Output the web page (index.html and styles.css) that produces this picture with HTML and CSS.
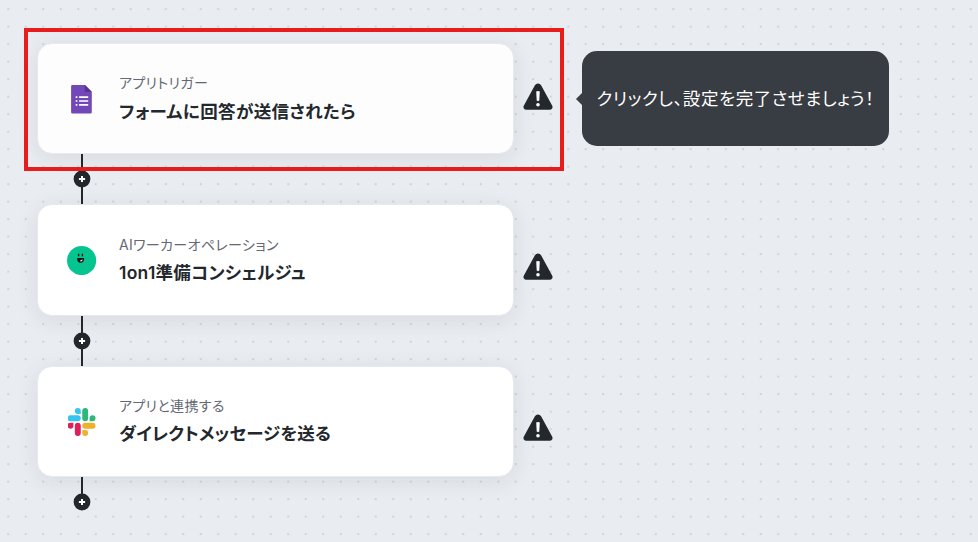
FILE: index.html
```html
<!DOCTYPE html>
<html lang="ja">
<head>
  <meta charset="UTF-8">
  <meta name="viewport" content="width=device-width, initial-scale=1.0">
  <title>ワークフロー</title>
  <link rel="stylesheet" href="styles.css">
</head>
<body>
  <svg class="symbols" width="0" height="0">
    <symbol id="warning" viewBox="0 0 30 28">
      <path d="M11.9 2.2a3.6 3.6 0 0 1 6.2 0l11 20.2a2.9 2.9 0 0 1-2.6 4.4h-23a2.9 2.9 0 0 1-2.6-4.4z" fill="#23282d"/>
      <path d="M13.7 8.6h2.6l-.4 9h-1.800z" fill="#fff" stroke="#fff" stroke-width=".8" stroke-linejoin="round"/>
      <circle cx="15" cy="21.8" r="1.8" fill="#fff"/>
    </symbol>
    <symbol id="plus" viewBox="0 0 18 18">
      <circle cx="9" cy="9" r="8.4" fill="#23282d"/>
      <path d="M9 5.9v6.2M5.9 9h6.2" stroke="#fff" stroke-width="2"/>
    </symbol>
  </svg>

  <main class="flow">
    <div class="step">
      <div class="card hovered">
        <svg class="icon" viewBox="0 0 30 30">
          <path d="M5.500 1.100h12.700l6.600 6.600v20.500a1.400 1.400 0 0 1-1.400 1.400H5.500a1.400 1.400 0 0 1-1.400-1.400V2.500A1.400 1.400 0 0 1 5.500 1.100z" fill="#7248b9"/>
          <path d="M17.800 1.100l7 7h-7z" fill="#543591"/>
          <path d="M8.700 13.100h1.700M12.100 13.100h9.100M8.700 17h1.700M12.100 17h9.100M8.700 20.900h1.700M12.100 20.900h9.100" stroke="#fff" stroke-width="1.7"/>
        </svg>
        <div class="text">
          <div class="label">アプリトリガー</div>
          <div class="title">フォームに回答が送信されたら</div>
        </div>
      </div>
      <svg class="warning first"><use href="#warning"/></svg>
      <div class="highlight"></div>
      <div class="tooltip">クリックし、設定を完了させましょう！</div>
    </div>
    <div class="connector"><svg class="plus"><use href="#plus"/></svg></div>

    <div class="step">
      <div class="card middle">
        <svg class="icon" viewBox="0 0 30 30">
          <circle cx="14.6" cy="15.5" r="14.6" fill="#05c48f"/>
          <path d="M11.6 8.8v2.400M15.400 8.800v2.400" stroke="#111" stroke-width="1.3"/>
          <path d="M10 12.900h7.200c0 3.200-1.200 4.800-3.600 4.800s-3.600-1.600-3.600-4.800z" fill="#111"/>
          <path d="M12.6 16l2.600-1.600.6.700-1.600 1.500z" fill="#fff"/>
        </svg>
        <div class="text">
          <div class="label">AIワーカーオペレーション</div>
          <div class="title">1on1準備コンシェルジュ</div>
        </div>
      </div>
      <svg class="warning"><use href="#warning"/></svg>
    </div>
    <div class="connector"><svg class="plus"><use href="#plus"/></svg></div>

    <div class="step">
      <div class="card lower">
        <svg class="icon slack" viewBox="0 0 122.8 122.8">
          <path d="M25.8 77.6a12.9 12.9 0 1 1-12.9-12.9h12.9zM32.3 77.6a12.9 12.9 0 0 1 25.8 0v32.3a12.9 12.9 0 0 1-25.8 0z" fill="#e01e5a"/>
          <path d="M45.2 25.8a12.9 12.9 0 1 1 12.9-12.9v12.9zM45.2 32.3a12.9 12.9 0 0 1 0 25.8H12.9a12.9 12.9 0 0 1 0-25.8z" fill="#36c5f0"/>
          <path d="M97 45.2a12.9 12.9 0 1 1 12.9 12.9H97zM90.5 45.2a12.9 12.9 0 0 1-25.8 0V12.9a12.9 12.9 0 0 1 25.8 0z" fill="#2eb67d"/>
          <path d="M77.6 97a12.9 12.9 0 1 1-12.9 12.9V97zM77.6 90.5a12.9 12.9 0 0 1 0-25.8h32.3a12.9 12.9 0 0 1 0 25.8z" fill="#ecb22e"/>
        </svg>
        <div class="text">
          <div class="label">アプリと連携する</div>
          <div class="title">ダイレクトメッセージを送る</div>
        </div>
      </div>
      <svg class="warning"><use href="#warning"/></svg>
    </div>
    <div class="connector last"><svg class="plus"><use href="#plus"/></svg></div>
  </main>
</body>
</html>
```
FILE: styles.css
```css
* {
  box-sizing: border-box;
}

body {
  margin: 0;
  height: 542px;
  overflow: hidden;
  background-color: #e9ecf1;
  background-image: radial-gradient(circle, #cfd3d9 1px, transparent 1.5px);
  background-size: 17.5px 17.5px;
  background-position: -0.5px 0.4px;
  font-family: Inter, "Noto Sans CJK JP", sans-serif;
  font-feature-settings: "palt";
  color: #23282d;
}

.symbols {
  position: absolute;
}

.flow {
  padding: 43px 0 0 37px;
}

.step {
  position: relative;
  display: flex;
  align-items: center;
  gap: 9px;
}

.card {
  display: flex;
  align-items: center;
  gap: 22px;
  width: 477px;
  height: 111px;
  padding: 0 29px;
  background: #fff;
  border: 1px solid #e6e9ed;
  border-radius: 15px;
  box-shadow: 0 4px 22px rgba(35, 45, 55, 0.09);
}

.card.hovered {
  background: #fdfdfd;
}

.card.middle {
  height: 112px;
}

.icon {
  width: 30px;
  height: 30px;
  flex-shrink: 0;
}

.icon.slack {
  padding: 1px 1.5px 1px 0.5px;
}

.text {
  padding-top: 1px;
}

.label {
  font-size: 14px;
  line-height: 20px;
  letter-spacing: 0.35px;
  color: #646872;
  white-space: nowrap;
}

.title {
  margin-top: 5px;
  font-size: 17.5px;
  line-height: 28px;
  font-weight: 600;
  letter-spacing: 0.36px;
  white-space: nowrap;
}

.middle .text {
  padding-top: 2px;
}

.middle .title {
  margin-top: 4px;
  letter-spacing: 0.28px;
}

.lower .title {
  margin-top: 4px;
  letter-spacing: 0.12px;
}

.warning {
  width: 30px;
  height: 28px;
  margin-top: 13px;
}

.warning.first {
  margin-top: -4px;
}

.connector {
  display: flex;
  align-items: center;
  width: 18px;
  height: 50px;
  margin-left: 36px;
  background: linear-gradient(#23282d, #23282d) center / 2px 100% no-repeat;
}

.connector.last {
  height: 34px;
  align-items: flex-end;
  background-position: top;
  background-size: 2px 26px;
}

.plus {
  width: 18px;
  height: 18px;
}

/* red frame drawn over the first step */
.highlight {
  position: absolute;
  top: -15px;
  left: -13px;
  width: 540px;
  height: 143px;
  border: 4px solid #e91c1c;
}

.tooltip {
  position: absolute;
  top: 8px;
  left: 545px;
  width: 307px;
  height: 95px;
  padding-bottom: 2px;
  display: flex;
  align-items: center;
  justify-content: center;
  background: #383c43;
  border-radius: 15px;
  color: #fff;
  font-size: 17.5px;
  letter-spacing: 0.55px;
  white-space: nowrap;
}

.tooltip::before {
  content: "";
  position: absolute;
  left: -6.5px;
  top: 41px;
  border: solid transparent;
  border-width: 7px 7px 7px 0;
  border-right-color: #383c43;
}
```
